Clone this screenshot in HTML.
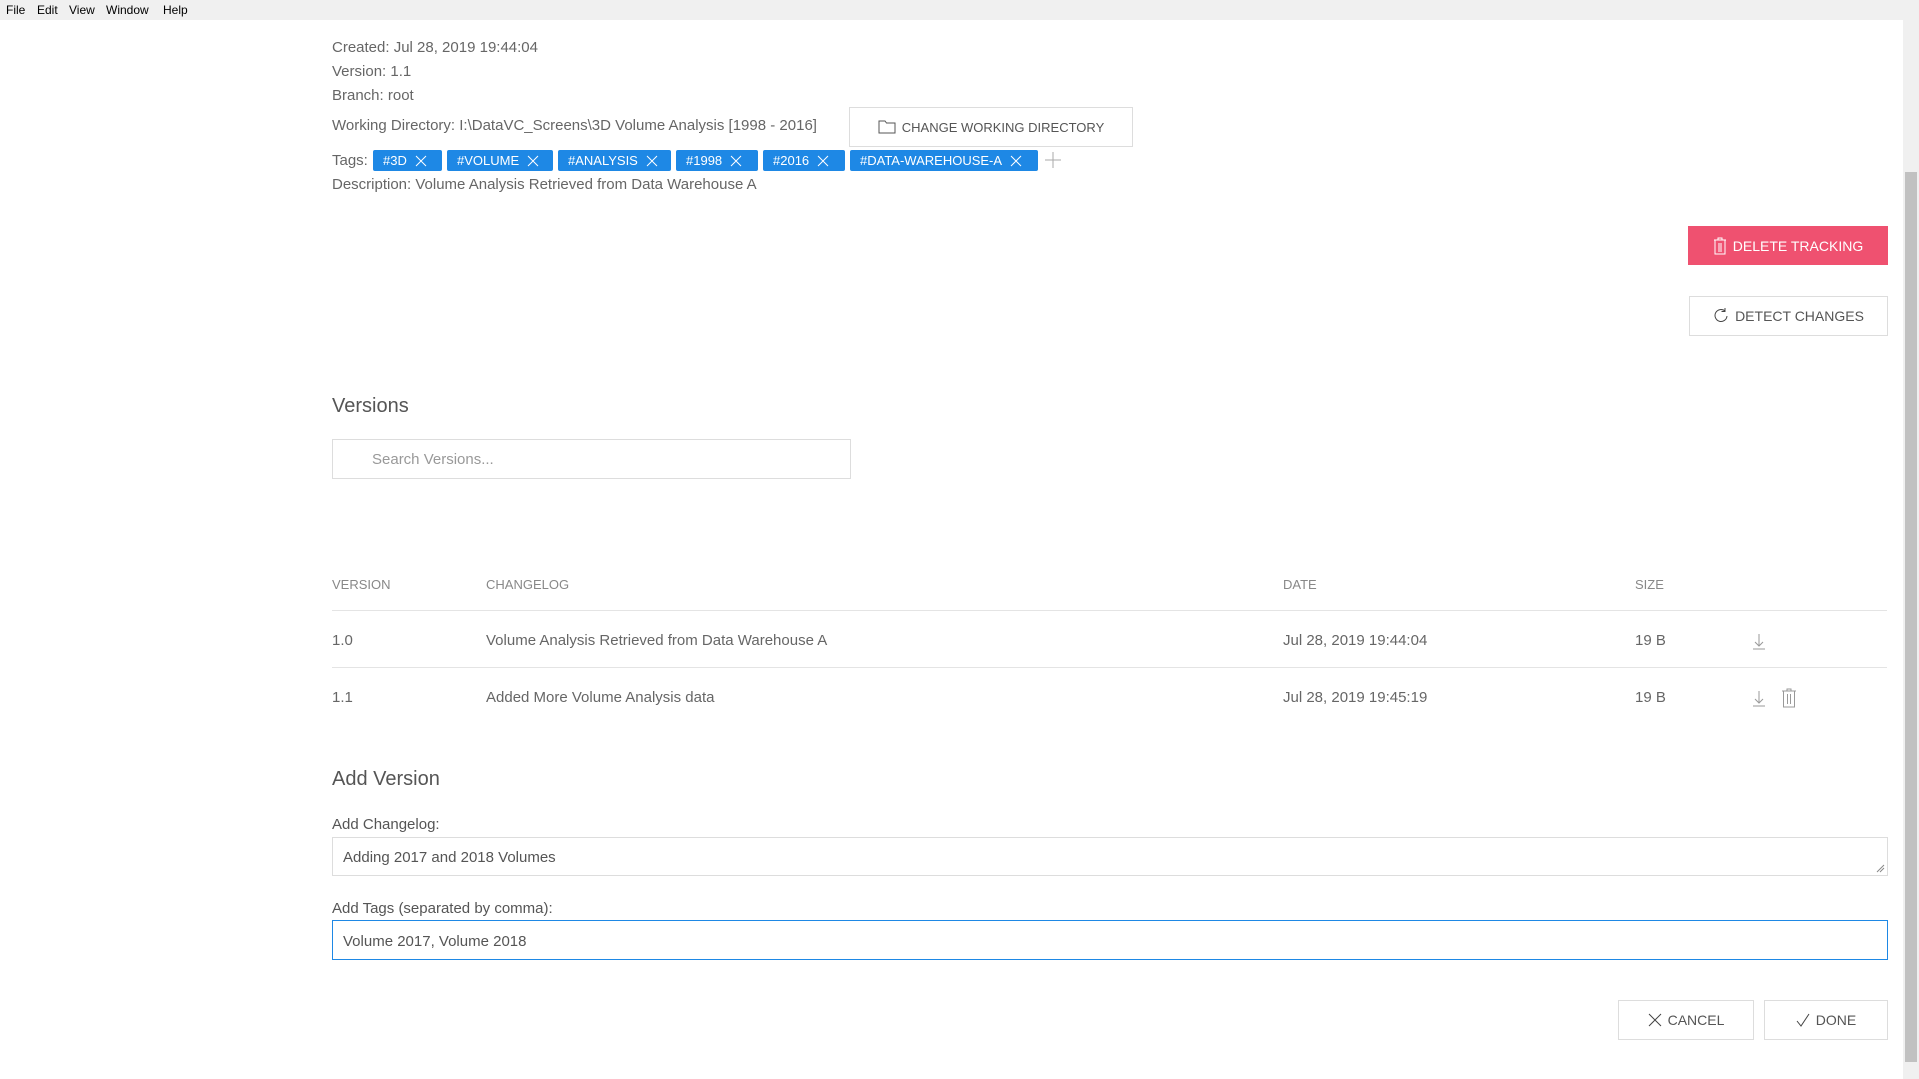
<!DOCTYPE html>
<html><head><meta charset="utf-8"><style>
body{margin:0;width:1919px;height:1079px;position:relative;background:#fff;font-family:"Liberation Sans",sans-serif;color:#666;overflow:hidden}
.a{position:absolute;white-space:nowrap}
.t{font-size:15px;line-height:18px}
.menu{left:0;top:0;width:1919px;height:20px;background:#f0f0f0;font-size:12px;color:#000}
.menu span{position:absolute;top:3px}
.tag{position:absolute;top:150px;height:21px;background:#1e88e5;color:#fff;font-size:13px;line-height:21px;border-radius:2px;box-sizing:border-box;padding-left:10px;display:flex;align-items:center;gap:8px}
.btn{position:absolute;border:1px solid #ddd;background:#fff;color:#555;font-size:13px;box-sizing:border-box;display:flex;align-items:center;justify-content:center;gap:6px}
.hd{font-size:13px;color:#888}
.line{position:absolute;left:332px;width:1555px;height:1px;background:#e4e4e4}
.box{position:absolute;border:1px solid #ddd;box-sizing:border-box}
</style></head><body>
<div class="a menu"><span style="left:6px">File</span><span style="left:37px">Edit</span><span style="left:69px">View</span><span style="left:106px">Window</span><span style="left:163px">Help</span></div>
<div class="a t" style="left:332px;top:39px">Created: Jul 28, 2019 19:44:04</div>
<div class="a t" style="left:332px;top:63px">Version: 1.1</div>
<div class="a t" style="left:332px;top:87px">Branch: root</div>
<div class="a t" style="left:332px;top:117px">Working Directory: I:\DataVC_Screens\3D Volume Analysis [1998 - 2016]</div>
<div class="btn" style="left:849px;top:107px;width:284px;height:40px"><svg width="18" height="14" viewBox="0 0 18 14"><path d="M1 1h6l1.5 2H17v10H1z" fill="none" stroke="#555"/></svg>CHANGE WORKING DIRECTORY</div>
<div class="a t" style="left:332px;top:152px">Tags:</div>
<div class="tag" style="left:373px;width:69px">#3D <svg width="12" height="12"><path d="M1 1l10 10M11 1L1 11" stroke="#fff"/></svg></div>
<div class="tag" style="left:447px;width:106px">#VOLUME <svg width="12" height="12"><path d="M1 1l10 10M11 1L1 11" stroke="#fff"/></svg></div>
<div class="tag" style="left:558px;width:113px">#ANALYSIS <svg width="12" height="12"><path d="M1 1l10 10M11 1L1 11" stroke="#fff"/></svg></div>
<div class="tag" style="left:676px;width:82px">#1998 <svg width="12" height="12"><path d="M1 1l10 10M11 1L1 11" stroke="#fff"/></svg></div>
<div class="tag" style="left:763px;width:82px">#2016 <svg width="12" height="12"><path d="M1 1l10 10M11 1L1 11" stroke="#fff"/></svg></div>
<div class="tag" style="left:850px;width:188px">#DATA-WAREHOUSE-A <svg width="12" height="12"><path d="M1 1l10 10M11 1L1 11" stroke="#fff"/></svg></div>
<svg class="a" style="left:1045px;top:152px" width="16" height="16"><path d="M8 0v16M0 8h16" stroke="#aaa"/></svg>
<div class="a t" style="left:332px;top:176px">Description: Volume Analysis Retrieved from Data Warehouse A</div>
<div class="btn" style="left:1688px;top:226px;width:200px;height:39px;background:#ef5170;border:none;color:#fff;font-size:14px"><svg width="14" height="18" viewBox="0 0 14 18"><path d="M1 3h12M5 3V1h4v2M2 3v14h10V3M6 6v9M8 6v9" fill="none" stroke="#fff"/></svg>DELETE TRACKING</div>
<div class="btn" style="left:1689px;top:296px;width:199px;height:40px;font-size:14px"><svg width="16" height="16" viewBox="0 0 16 16"><path d="M12 3A6 6 0 1 0 14 8M12 0v3.5H8.5" fill="none" stroke="#444"/></svg>DETECT CHANGES</div>
<div class="a" style="left:332px;top:395px;font-size:20px;color:#555">Versions</div>
<div class="box" style="left:332px;top:439px;width:519px;height:40px"></div>
<div class="a t" style="left:372px;top:451px;color:#999">Search Versions...</div>
<div class="a hd" style="left:332px;top:577px">VERSION</div>
<div class="a hd" style="left:486px;top:577px">CHANGELOG</div>
<div class="a hd" style="left:1283px;top:577px">DATE</div>
<div class="a hd" style="left:1635px;top:577px">SIZE</div>
<div class="line" style="top:610px"></div>
<div class="a t" style="left:332px;top:632px">1.0</div>
<div class="a t" style="left:486px;top:632px">Volume Analysis Retrieved from Data Warehouse A</div>
<div class="a t" style="left:1283px;top:632px">Jul 28, 2019 19:44:04</div>
<div class="a t" style="left:1635px;top:632px">19 B</div>
<svg class="a" style="left:1751px;top:633px" width="16" height="17" viewBox="0 0 16 17"><path d="M8 1v12M4 9l4 4 4-4M2 16h12" fill="none" stroke="#999"/></svg>
<div class="line" style="top:667px"></div>
<div class="a t" style="left:332px;top:689px">1.1</div>
<div class="a t" style="left:486px;top:689px">Added More Volume Analysis data</div>
<div class="a t" style="left:1283px;top:689px">Jul 28, 2019 19:45:19</div>
<div class="a t" style="left:1635px;top:689px">19 B</div>
<svg class="a" style="left:1751px;top:690px" width="16" height="17" viewBox="0 0 16 17"><path d="M8 1v12M4 9l4 4 4-4M2 16h12" fill="none" stroke="#999"/></svg>
<svg class="a" style="left:1781px;top:688px" width="16" height="20" viewBox="0 0 16 20"><path d="M1 3h14M6 3V1h4v2M2.5 3v16h11V3M6.5 6v10M9.5 6v10" fill="none" stroke="#999"/></svg>
<div class="a" style="left:332px;top:768px;font-size:20px;color:#555">Add Version</div>
<div class="a t" style="left:332px;top:816px;color:#555">Add Changelog:</div>
<div class="box" style="left:332px;top:837px;width:1556px;height:39px"></div>
<div class="a t" style="left:343px;top:849px;color:#555">Adding 2017 and 2018 Volumes</div>
<svg class="a" style="left:1876px;top:864px" width="9" height="9"><path d="M1 8l7-7M4 8l4-4" stroke="#888"/></svg>
<div class="a t" style="left:332px;top:900px;color:#555">Add Tags (separated by comma):</div>
<div class="box" style="left:332px;top:920px;width:1556px;height:40px;border-color:#1e88e5"></div>
<div class="a t" style="left:343px;top:933px;color:#555">Volume 2017, Volume 2018</div>
<div class="btn" style="left:1618px;top:1000px;width:136px;height:40px;font-size:14px"><svg width="14" height="14"><path d="M1 1l12 12M13 1L1 13" stroke="#444"/></svg>CANCEL</div>
<div class="btn" style="left:1764px;top:1000px;width:124px;height:40px;font-size:14px"><svg width="14" height="14"><path d="M1 8l4 5 8-12" fill="none" stroke="#444"/></svg>DONE</div>
<div class="a" style="left:1903px;top:20px;width:16px;height:1059px;background:#f0f0f0"></div>
<div class="a" style="left:1905px;top:172px;width:12px;height:890px;background:#c1c1c1"></div>
</body></html>
